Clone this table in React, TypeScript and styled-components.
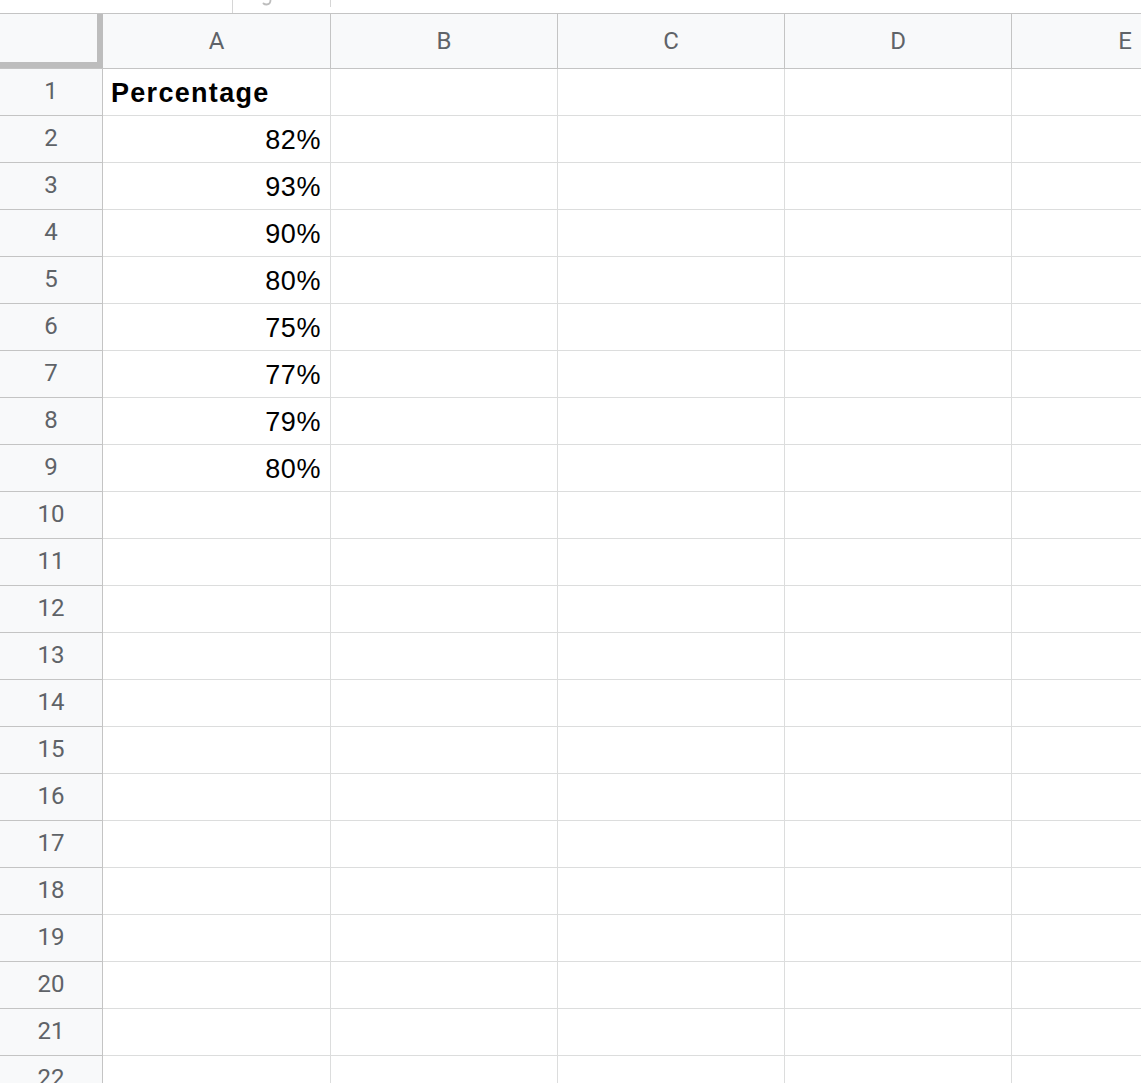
import React from "react";
import styled, { createGlobalStyle } from "styled-components";

const GlobalStyle = createGlobalStyle`
  html, body { margin: 0; padding: 0; background: #ffffff; }
  body { font-family: "Liberation Sans", Arial, sans-serif; }
`;

const Page = styled.div`
  width: 1141px;
  height: 1083px;
  overflow: hidden;
  background: #ffffff;
`;

const TopStrip = styled.div`
  height: 13px;
  display: flex;
  align-items: flex-start;
  padding-left: 232px;
  border-bottom: 1px solid #c4c4c4;
`;

const FxBox = styled.div`
  width: 98px;
  height: 13px;
  box-sizing: border-box;
  border-left: 1px solid #d6d6d6;
  display: flex;
  align-items: flex-start;
  padding-left: 27px;
`;

const Tick = styled.div`
  width: 1px;
  height: 7px;
  background: #d6d6d6;
`;

const Sheet = styled.div`
  display: grid;
  grid-template-columns: 103px 228px 227px 227px 227px 227px;
  grid-template-rows: 55px;
  grid-auto-rows: 47px;
`;

const Corner = styled.div`
  background: #f8f9fa;
  border-bottom: 1px solid #c4c4c4;
  box-shadow: inset -6px -6px 0 #bdbdbd;
`;

const HeaderBase = styled.div`
  background: #f8f9fa;
  border-right: 1px solid #c4c4c4;
  border-bottom: 1px solid #c4c4c4;
  display: flex;
  align-items: center;
  justify-content: center;
  font-family: Roboto, "Liberation Sans", sans-serif;
  font-size: 24px;
  color: #5f6368;
`;

const ColHeader = styled(HeaderBase)`
  padding-bottom: 1px;
`;

const RowHeader = styled(HeaderBase)`
  padding-bottom: 3px;
`;

const Cell = styled.div<{ $align?: "left" | "right"; $bold?: boolean }>`
  border-right: 1px solid #dcdddd;
  border-bottom: 1px solid #dcdddd;
  display: flex;
  align-items: flex-end;
  justify-content: ${(p) => (p.$align === "right" ? "flex-end" : "flex-start")};
  padding: 0 9px 8px 8px;
  font-family: "Liberation Sans", Arial, sans-serif;
  font-size: 27px;
  line-height: 27px;
  letter-spacing: ${(p) => (p.$bold ? "1.3px" : "0.6px")};
  font-weight: ${(p) => (p.$bold ? 700 : 400)};
  color: #000000;
  white-space: nowrap;
  overflow: hidden;
`;

const columns = ["A", "B", "C", "D", "E"];
const values = ["82%", "93%", "90%", "80%", "75%", "77%", "79%", "80%"];
const ROWS = 22;

export default function App() {
  const rows = Array.from({ length: ROWS }, (_, i) => i + 1);
  return (
    <Page>
      <GlobalStyle />
      <TopStrip>
        <FxBox>
          <svg width="14" height="6" viewBox="0 0 14 6">
            <path
              d="M10.5 0 C10.5 3 9 4.5 6.5 4.5 C5 4.5 4 4 3.5 3.5"
              fill="none"
              stroke="#bdbdbd"
              strokeWidth="1.8"
              strokeLinecap="round"
            />
          </svg>
        </FxBox>
        <Tick />
      </TopStrip>
      <Sheet>
        <Corner />
        {columns.map((c) => (
          <ColHeader key={c}>{c}</ColHeader>
        ))}
        {rows.map((r) => (
          <React.Fragment key={r}>
            <RowHeader>{r}</RowHeader>
            {columns.map((c) => {
              if (c === "A" && r === 1) {
                return (
                  <Cell key={c} $bold>
                    Percentage
                  </Cell>
                );
              }
              if (c === "A" && r >= 2 && r <= 9) {
                return (
                  <Cell key={c} $align="right">
                    {values[r - 2]}
                  </Cell>
                );
              }
              return <Cell key={c} />;
            })}
          </React.Fragment>
        ))}
      </Sheet>
    </Page>
  );
}
